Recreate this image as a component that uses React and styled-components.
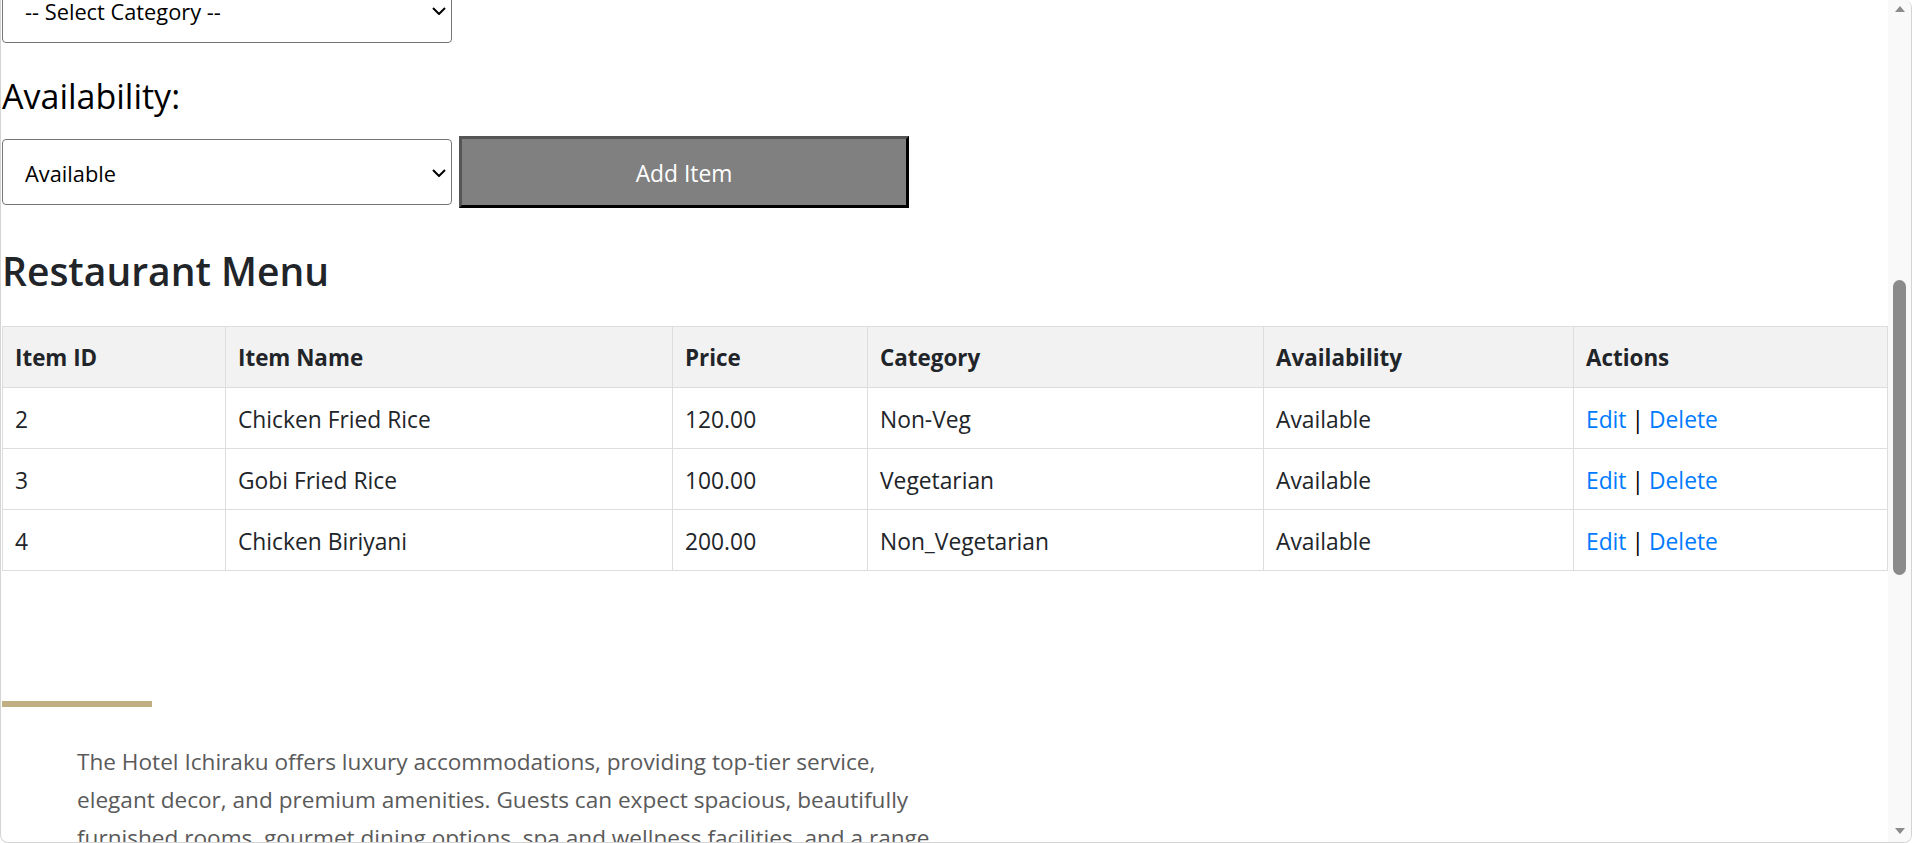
import React from "react";
import styled, { createGlobalStyle } from "styled-components";

const GlobalStyle = createGlobalStyle`
  html, body {
    margin: 0;
    padding: 0;
    background: #ffffff;
    overflow: hidden;
  }
  body {
    font-family: "Segoe UI", "Open Sans", "Noto Sans", sans-serif;
    color: #212529;
  }
`;

const Window = styled.div`
  width: 1910px;
  height: 842px;
  display: flex;
  border: 1px solid #d4d4d4;
  border-top: none;
  border-radius: 0 8px 8px 8px;
  overflow: hidden;
`;

const Main = styled.main`
  flex: 1;
  padding-left: 1px;
  overflow: hidden;
`;

const Page = styled.div`
  margin-top: -23px;
`;

const SelectWrap = styled.div`
  position: relative;
  width: 450px;
  height: 66px;
`;

const Select = styled.select`
  appearance: none;
  display: block;
  width: 100%;
  height: 100%;
  padding: 2px 40px 0 22px;
  font-family: inherit;
  font-size: 21.8px;
  color: #000;
  background: #fff;
  border: 1px solid #767676;
  border-radius: 4px;
`;

const Chevron = styled.svg`
  position: absolute;
  right: 6px;
  top: 50%;
  width: 14px;
  height: 8px;
  margin-top: -3px;
  fill: none;
  stroke: #000;
  stroke-width: 2;
  pointer-events: none;
`;

const Label = styled.label`
  display: block;
  margin: 33px 0 20px;
  font-size: 34px;
  line-height: 40px;
  color: #000;
`;

const FormRow = styled.div`
  display: flex;
  align-items: center;
  gap: 7px;
`;

const AddButton = styled.button`
  width: 450px;
  height: 72px;
  padding-top: 3px;
  font-family: inherit;
  font-size: 22.8px;
  color: #fff;
  background: #808080;
  border-width: 3px;
  border-style: solid;
  border-color: #555 #000 #000 #555;
  cursor: pointer;
`;

const Heading = styled.h2`
  margin: 39px 0 31px;
  font-size: 39px;
  line-height: 48px;
  font-weight: 600;
  color: #212529;
`;

const Table = styled.table`
  width: 1885px;
  table-layout: fixed;
  border-collapse: collapse;
  font-size: 22.8px;
`;

const Col = styled.col`
  width: ${(p) => p.$w}px;
`;

const Th = styled.th`
  padding: 16px 12px 14px;
  line-height: 30px;
  text-align: left;
  font-weight: 700;
  font-size: 22.4px;
  background: #f2f2f2;
  border: 1px solid #dddddd;
`;

const Td = styled.td`
  padding: 17px 12px 13px;
  line-height: 30px;
  border: 1px solid #dddddd;
`;

const ActionLink = styled.a`
  color: #007bff;
  text-decoration: none;
`;

const Divider = styled.span`
  margin: 0 5px;
  color: #000;
`;

const Footer = styled.footer`
  margin-top: 130px;
`;

const Accent = styled.div`
  width: 150px;
  height: 6px;
  background: #c1af84;
`;

const About = styled.p`
  width: 870px;
  margin: 36px 0 0 75px;
  font-size: 22.6px;
  line-height: 38px;
  color: #5a5a5a;
`;

const Rail = styled.div`
  width: 23px;
  display: flex;
  flex-direction: column;
  align-items: center;
  background: #f9f9f9;
`;

const Arrow = styled.svg`
  width: 12px;
  height: 8px;
  margin: ${(p) => (p.$down ? "0 0 7px" : "5px 0 0")};
  fill: #8b8b8b;
`;

const Track = styled.div`
  flex: 1;
  width: 100%;
  display: flex;
  justify-content: center;
  padding-top: 267px;
`;

const Thumb = styled.div`
  width: 13px;
  height: 295px;
  border-radius: 7px;
  background: #8b8b8b;
`;

const columns = [223, 447, 195, 396, 310, 314];

const items = [
  { id: 2, name: "Chicken Fried Rice", price: "120.00", category: "Non-Veg", availability: "Available" },
  { id: 3, name: "Gobi Fried Rice", price: "100.00", category: "Vegetarian", availability: "Available" },
  { id: 4, name: "Chicken Biriyani", price: "200.00", category: "Non_Vegetarian", availability: "Available" },
];

function Dropdown({ value, children }) {
  return (
    <SelectWrap>
      <Select defaultValue={value}>{children}</Select>
      <Chevron viewBox="0 0 14 8">
        <polyline points="1,1 7,7 13,1" />
      </Chevron>
    </SelectWrap>
  );
}

export default function App() {
  return (
    <>
      <GlobalStyle />
      <Window>
        <Main>
          <Page>
            <Dropdown value="">
              <option value="">-- Select Category --</option>
              <option>Vegetarian</option>
              <option>Non-Veg</option>
            </Dropdown>
            <Label>Availability:</Label>
            <FormRow>
              <Dropdown value="Available">
                <option>Available</option>
                <option>Not Available</option>
              </Dropdown>
              <AddButton type="button">Add Item</AddButton>
            </FormRow>

            <Heading>Restaurant Menu</Heading>
            <Table>
              <colgroup>
                {columns.map((w, i) => (
                  <Col key={i} $w={w} />
                ))}
              </colgroup>
              <thead>
                <tr>
                  <Th>Item ID</Th>
                  <Th>Item Name</Th>
                  <Th>Price</Th>
                  <Th>Category</Th>
                  <Th>Availability</Th>
                  <Th>Actions</Th>
                </tr>
              </thead>
              <tbody>
                {items.map((item) => (
                  <tr key={item.id}>
                    <Td>{item.id}</Td>
                    <Td>{item.name}</Td>
                    <Td>{item.price}</Td>
                    <Td>{item.category}</Td>
                    <Td>{item.availability}</Td>
                    <Td>
                      <ActionLink href="#">Edit</ActionLink>
                      <Divider>|</Divider>
                      <ActionLink href="#">Delete</ActionLink>
                    </Td>
                  </tr>
                ))}
              </tbody>
            </Table>

            <Footer>
              <Accent />
              <About>
                The Hotel Ichiraku offers luxury accommodations, providing top-tier service,
                elegant decor, and premium amenities. Guests can expect spacious, beautifully
                furnished rooms, gourmet dining options, spa and wellness facilities, and a range
                of personalized services for a memorable stay.
              </About>
            </Footer>
          </Page>
        </Main>
        <Rail>
          <Arrow viewBox="0 0 12 8">
            <path d="M6 1 L11 7 L1 7 Z" />
          </Arrow>
          <Track>
            <Thumb />
          </Track>
          <Arrow $down viewBox="0 0 12 8">
            <path d="M1 1 L11 1 L6 7 Z" />
          </Arrow>
        </Rail>
      </Window>
    </>
  );
}
